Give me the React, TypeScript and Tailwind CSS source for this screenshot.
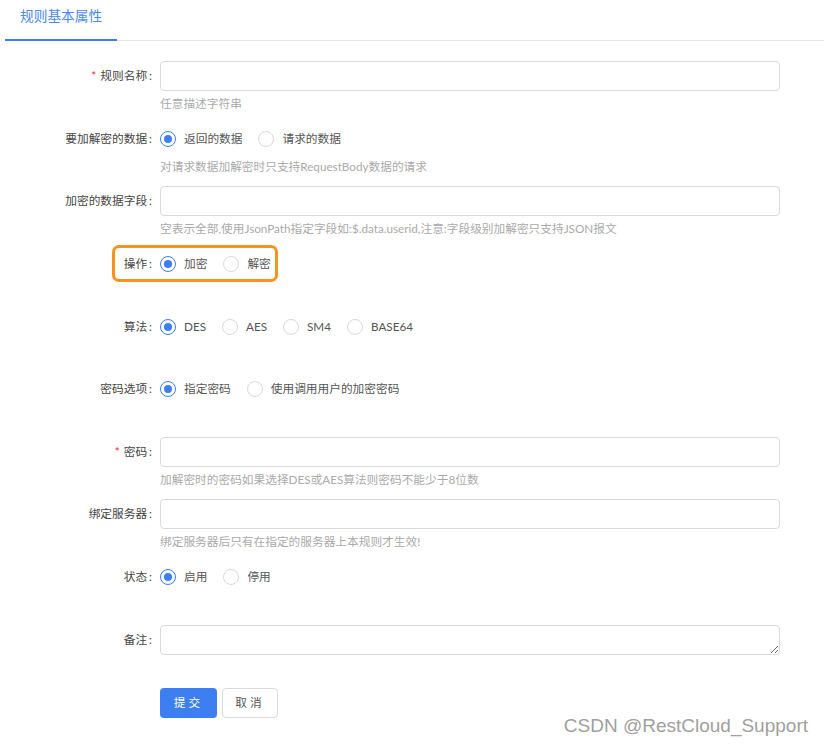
import type { ReactNode } from 'react'

const FONT = { fontFamily: 'Lato, "Noto Sans CJK SC", sans-serif' }

function Label({ text, required }: { text: string; required?: boolean }) {
  return (
    <div className="w-[160px] shrink-0 h-[30px] flex items-center justify-end text-[11.7px] text-[#444]">
      {required && <span className="text-[#f5222d] mr-[4px]">*</span>}
      <span>{text}</span>
      <span className="ml-[2px] mr-[8px]">:</span>
    </div>
  )
}

function Radio({ label, checked }: { label: string; checked?: boolean }) {
  return (
    <label className="inline-flex items-center mr-[8px] cursor-pointer">
      <span
        className={
          'w-[16px] h-[16px] rounded-full border flex items-center justify-center bg-white ' +
          (checked ? 'border-[#3d7ef0]' : 'border-[#d9d9d9]')
        }
      >
        {checked && <span className="w-[8px] h-[8px] rounded-full bg-[#3d7ef0]" />}
      </span>
      <span className="px-[8px] text-[11.7px] text-[#555]">{label}</span>
    </label>
  )
}

function Item({
  label,
  required,
  help,
  h,
  children,
}: {
  label: string
  required?: boolean
  help?: string
  h: string
  children: ReactNode
}) {
  return (
    <div className={'flex items-start ' + h}>
      <Label text={label} required={required} />
      <div className="flex-1 min-w-0">
        <div className="h-[30px] flex items-center">{children}</div>
        {help && <div className="mt-[3px] leading-[18px] text-[11.7px] text-[#aaa]">{help}</div>}
      </div>
    </div>
  )
}

function Input() {
  return (
    <input
      className="w-[620px] h-[30px] rounded-[4px] border border-[#d9d9d9] bg-white px-[10px] text-[12px] outline-none"
      type="text"
    />
  )
}

export default function App() {
  return (
    <div className="relative w-[824px] min-h-[745px] bg-white overflow-hidden" style={FONT}>
      <div className="ml-[5px] h-[41px] border-b border-[#e8e8e8] flex">
        <div className="relative px-[15px] pt-[6px] text-[13.7px] text-[#4a88ef]">
          规则基本属性
          <div className="absolute left-0 right-0 bottom-[-1px] h-[2px] bg-[#3d7ef0]" />
        </div>
      </div>

      <div className="pt-[20px]">
        <Item label="规则名称" required help="任意描述字符串" h="h-[63px]">
          <Input />
        </Item>
        <Item label="要加解密的数据" help="对请求数据加解密时只支持RequestBody数据的请求" h="h-[62px]">
          <Radio label="返回的数据" checked />
          <Radio label="请求的数据" />
        </Item>
        <Item
          label="加密的数据字段"
          help="空表示全部,使用JsonPath指定字段如:$.data.userid,注意:字段级别加解密只支持JSON报文"
          h="h-[63px]"
        >
          <Input />
        </Item>
        <div className="relative">
          <Item label="操作" h="h-[63px]">
            <Radio label="加密" checked />
            <Radio label="解密" />
          </Item>
          <div className="absolute left-[112px] top-[-4px] w-[166px] h-[37px] rounded-[7px] border-[3px] border-[#f7921f] pointer-events-none" />
        </div>
        <Item label="算法" h="h-[62px]">
          <Radio label="DES" checked />
          <Radio label="AES" />
          <Radio label="SM4" />
          <Radio label="BASE64" />
        </Item>
        <Item label="密码选项" h="h-[63px]">
          <Radio label="指定密码" checked />
          <Radio label="使用调用用户的加密密码" />
        </Item>
        <Item label="密码" required help="加解密时的密码如果选择DES或AES算法则密码不能少于8位数" h="h-[62px]">
          <Input />
        </Item>
        <Item label="绑定服务器" help="绑定服务器后只有在指定的服务器上本规则才生效!" h="h-[63px]">
          <Input />
        </Item>
        <Item label="状态" h="h-[63px]">
          <Radio label="启用" checked />
          <Radio label="停用" />
        </Item>
        <Item label="备注" h="h-[63px]">
          <textarea className="block w-[620px] h-[30px] min-h-[30px] rounded-[4px] border border-[#d9d9d9] bg-white px-[10px] py-[5px] text-[12px] outline-none resize-y" />
        </Item>
        <div className="flex pl-[160px] gap-[5px]">
          <button className="w-[57px] h-[30px] rounded-[4px] bg-[#3d7ef0] text-white text-[11.7px] tracking-[3px]">
            提交
          </button>
          <button className="w-[56px] h-[30px] rounded-[4px] border border-[#d9d9d9] bg-white text-[#555] text-[11.7px] tracking-[3px]">
            取消
          </button>
        </div>
      </div>

      <div
        className="absolute right-[16px] top-[712px] text-[19px] text-[#a0a0a0]"
        style={{ fontFamily: '"Liberation Sans", Arial, sans-serif' }}
      >
        CSDN @RestCloud_Support
      </div>
    </div>
  )
}
